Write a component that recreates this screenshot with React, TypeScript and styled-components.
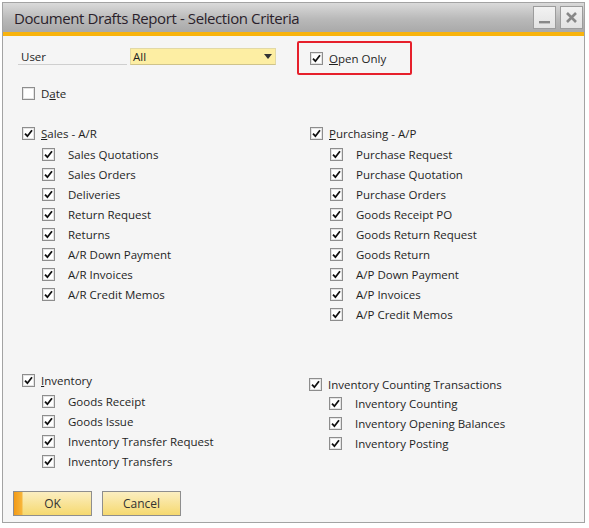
import styled, { createGlobalStyle } from 'styled-components';

const GlobalStyle = createGlobalStyle`
  html, body {
    margin: 0;
    padding: 0;
    background: #ffffff;
  }
  body {
    font-family: 'Open Sans', 'Noto Sans', 'DejaVu Sans', sans-serif;
    color: #1f1f1f;
  }
`;

const Window = styled.div`
  box-sizing: border-box;
  width: 583px;
  height: 521px;
  margin: 2px 0 0 2px;
  border: 1px solid #a3a3a3;
  display: flex;
  flex-direction: column;
  background: #f5f5f5;
`;

const TitleBar = styled.div`
  height: 29px;
  display: flex;
  align-items: center;
  justify-content: space-between;
  padding: 0 1px 0 11px;
  background: linear-gradient(#dadada, #b9b9b9 55%, #a9a9a9);
`;

const Title = styled.span`
  font-size: 15px;
  color: #2b1f2b;
  letter-spacing: -0.4px;
`;

const Controls = styled.div`
  display: flex;
  gap: 4px;
`;

const ControlButton = styled.div`
  width: 23px;
  height: 23px;
  box-sizing: border-box;
  border: 1px solid #9c9c9c;
  background: linear-gradient(#f2f2f2, #e2e2e2);
  display: flex;
  align-items: center;
  justify-content: center;
`;

const Accent = styled.div`
  height: 4px;
  background: #f8b30d;
`;

const Body = styled.div`
  flex: 1;
  display: flex;
  flex-direction: column;
  padding: 5px 0 0 15px;
`;

const TwoColumns = styled.div<{ $top?: number }>`
  display: grid;
  grid-template-columns: 279px 1fr;
  align-items: start;
  margin-top: ${(p) => p.$top ?? 0}px;
`;

const UserField = styled.div`
  display: flex;
  align-items: flex-end;
  margin-top: 7px;
`;

const FieldLabel = styled.div`
  width: 109px;
  padding-left: 3px;
  box-sizing: border-box;
  font-size: 11.5px;
  line-height: 15px;
  border-bottom: 1px solid #cfcfcf;
`;

const Dropdown = styled.div`
  box-sizing: border-box;
  width: 146px;
  height: 17px;
  margin-left: 3px;
  display: flex;
  align-items: center;
  justify-content: space-between;
  padding: 0 3px 0 2px;
  font-size: 11.5px;
  background: #fdeea3;
  border: 1px solid #e2d9a6;
  border-bottom-color: #cfc38a;
`;

const Arrow = styled.span`
  width: 0;
  height: 0;
  border-left: 4px solid transparent;
  border-right: 4px solid transparent;
  border-top: 5px solid #333;
`;

const Highlight = styled.div`
  box-sizing: border-box;
  width: 115px;
  height: 34px;
  border: 2px solid #e6202b;
  border-radius: 2px;
  display: flex;
  align-items: center;
  padding-left: 11px;
`;

const Group = styled.div<{ $indent: number; $top?: number }>`
  display: flex;
  flex-direction: column;
  padding-left: ${(p) => p.$indent}px;
  margin-top: ${(p) => p.$top ?? 0}px;
`;

const HeadRow = styled.label`
  display: flex;
  align-items: center;
  height: 16px;
  gap: 6px;
  font-size: 11.5px;
  cursor: default;
`;

const SubList = styled.div<{ $gap: number }>`
  display: flex;
  flex-direction: column;
  padding: ${(p) => p.$gap}px 0 0 20px;
`;

const SubRow = styled.label`
  display: flex;
  align-items: center;
  height: 20px;
  gap: 13px;
  font-size: 11.5px;
`;

const Box = styled.span`
  box-sizing: border-box;
  width: 13px;
  height: 13px;
  flex: none;
  border: 1px solid #8d8d8d;
  box-shadow: inset 0 0 0 1px #e4e4e4;
  background: #fff;
  display: flex;
  align-items: center;
  justify-content: center;
`;

const Buttons = styled.div`
  display: flex;
  gap: 10px;
  margin-top: auto;
  margin-bottom: 6px;
  margin-left: -5px;
`;

const Button = styled.div<{ $primary?: boolean }>`
  box-sizing: border-box;
  width: 79px;
  height: 25px;
  border: 1px solid #8e8e8e;
  display: flex;
  align-items: center;
  justify-content: center;
  font-size: 12px;
  color: #333;
  background: ${(p) =>
    p.$primary
      ? 'linear-gradient(90deg, #f39a16 0, #f7b53a 8px, transparent 9px), linear-gradient(#fbeec0, #f6d970)'
      : 'linear-gradient(#fbeec0, #f6d970)'};
`;

const Check = ({ checked = true }: { checked?: boolean }) => (
  <Box>
    {checked && (
      <svg width="9" height="9" viewBox="0 0 9 9">
        <path d="M1 4.6 L3.4 7.2 L8 1.3" fill="none" stroke="#111" strokeWidth="1.8" />
      </svg>
    )}
  </Box>
);

type GroupData = { head: React.ReactNode; items: string[] };

const CheckGroup = ({
  data,
  indent,
  top,
  gap = 3,
}: {
  data: GroupData;
  indent: number;
  top?: number;
  gap?: number;
}) => (
  <Group $indent={indent} $top={top}>
    <HeadRow>
      <Check />
      <span>{data.head}</span>
    </HeadRow>
    <SubList $gap={gap}>
      {data.items.map((item) => (
        <SubRow key={item}>
          <Check />
          <span>{item}</span>
        </SubRow>
      ))}
    </SubList>
  </Group>
);

const sales: GroupData = {
  head: (
    <>
      <u>S</u>ales - A/R
    </>
  ),
  items: [
    'Sales Quotations',
    'Sales Orders',
    'Deliveries',
    'Return Request',
    'Returns',
    'A/R Down Payment',
    'A/R Invoices',
    'A/R Credit Memos',
  ],
};

const purchasing: GroupData = {
  head: (
    <>
      <u>P</u>urchasing - A/P
    </>
  ),
  items: [
    'Purchase Request',
    'Purchase Quotation',
    'Purchase Orders',
    'Goods Receipt PO',
    'Goods Return Request',
    'Goods Return',
    'A/P Down Payment',
    'A/P Invoices',
    'A/P Credit Memos',
  ],
};

const inventory: GroupData = {
  head: (
    <>
      <u>I</u>nventory
    </>
  ),
  items: ['Goods Receipt', 'Goods Issue', 'Inventory Transfer Request', 'Inventory Transfers'],
};

const counting: GroupData = {
  head: 'Inventory Counting Transactions',
  items: ['Inventory Counting', 'Inventory Opening Balances', 'Inventory Posting'],
};

const App = () => {
  return (
    <>
      <GlobalStyle />
      <Window>
        <TitleBar>
          <Title>Document Drafts Report - Selection Criteria</Title>
          <Controls>
            <ControlButton>
              <svg width="13" height="13" viewBox="0 0 13 13">
                <rect x="1" y="10" width="11" height="2.4" fill="#888" />
              </svg>
            </ControlButton>
            <ControlButton>
              <svg width="13" height="13" viewBox="0 0 13 13">
                <path d="M2 2 L11 11 M11 2 L2 11" stroke="#888" strokeWidth="2.6" />
              </svg>
            </ControlButton>
          </Controls>
        </TitleBar>
        <Accent />
        <Body>
          <TwoColumns>
            <UserField>
              <FieldLabel>User</FieldLabel>
              <Dropdown>
                <span>All</span>
                <Arrow />
              </Dropdown>
            </UserField>
            <Highlight>
              <HeadRow>
                <Check />
                <span>
                  <u>O</u>pen Only
                </span>
              </HeadRow>
            </Highlight>
          </TwoColumns>
          <Group $indent={4} $top={10}>
            <HeadRow>
              <Check checked={false} />
              <span>
                D<u>a</u>te
              </span>
            </HeadRow>
          </Group>
          <TwoColumns $top={24}>
            <CheckGroup data={sales} indent={4} />
            <CheckGroup data={purchasing} indent={13} />
          </TwoColumns>
          <TwoColumns $top={48}>
            <CheckGroup data={inventory} indent={4} />
            <CheckGroup data={counting} indent={12} top={4} gap={1} />
          </TwoColumns>
          <Buttons>
            <Button $primary>OK</Button>
            <Button>Cancel</Button>
          </Buttons>
        </Body>
      </Window>
    </>
  );
};

export default App;
